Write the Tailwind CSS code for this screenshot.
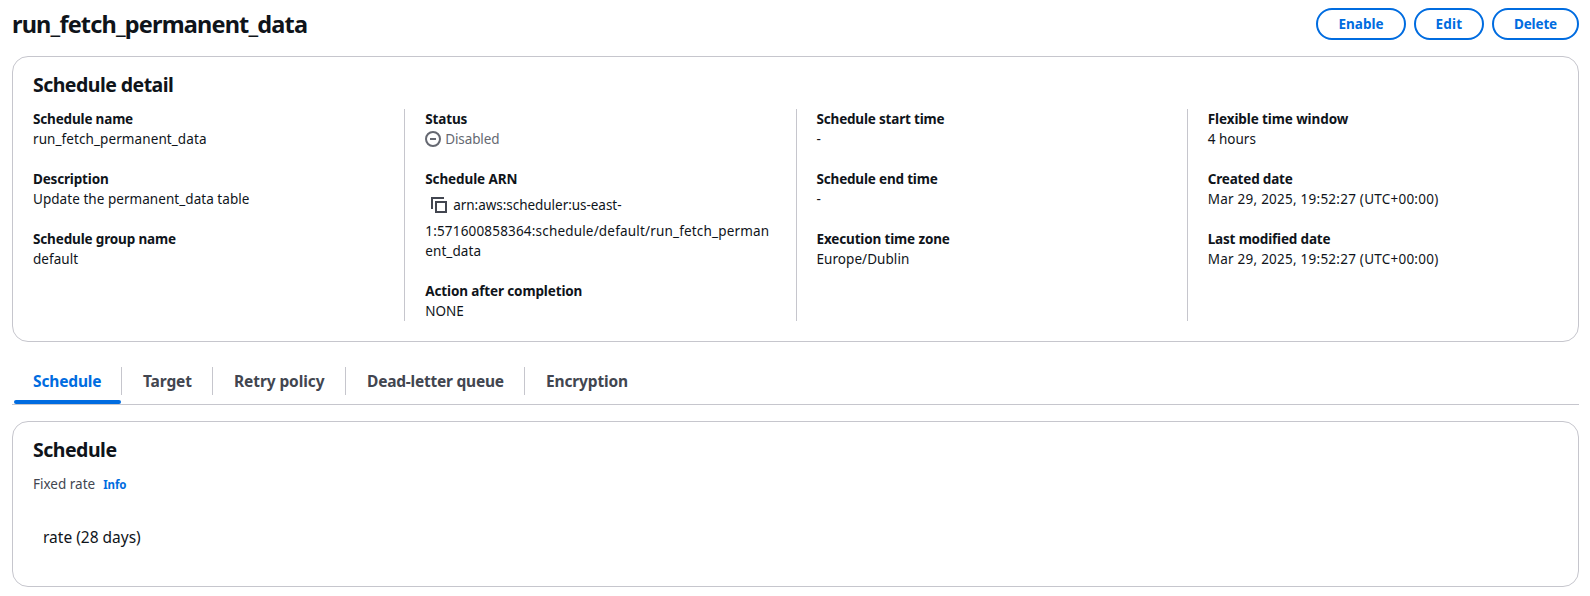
<!DOCTYPE html>
<html lang="en">
<head>
<meta charset="utf-8">
<title>run_fetch_permanent_data</title>
<script src="https://cdn.jsdelivr.net/npm/@tailwindcss/browser@4"></script>
</head>
<body class="bg-white pl-3 pr-[11px] pt-2 font-['Noto_Sans','Open_Sans',sans-serif] text-[13.5px] leading-5 text-[#0f141a]">
  <header class="flex h-8 items-center justify-between">
    <h1 class="text-[23.5px] leading-[30px] font-bold tracking-[-0.83px]">run_fetch_permanent_data</h1>
    <div class="flex gap-2 font-bold text-[#006ce0]">
      <button class="h-8 w-[90px] rounded-[20px] border-2 border-[#006ce0]">Enable</button>
      <button class="h-8 w-[70px] rounded-[20px] border-2 border-[#006ce0] tracking-[0.2px]">Edit</button>
      <button class="h-8 w-[87px] rounded-[20px] border-2 border-[#006ce0] tracking-[-0.15px]">Delete</button>
    </div>
  </header>

  <section class="mt-4 h-[286px] rounded-2xl border border-[#c6c6cd] pt-4">
    <h2 class="px-5 text-[19.5px] leading-6 font-bold tracking-[-0.54px]">Schedule detail</h2>
    <dl class="mt-3 grid h-[212px] grid-cols-4">
      <div class="flex flex-col gap-5 px-5">
        <div><dt class="font-bold tracking-[-0.17px]">Schedule name</dt><dd class="tracking-[0.09px]">run_fetch_permanent_data</dd></div>
        <div><dt class="font-bold tracking-[-0.17px]">Description</dt><dd class="tracking-[0.05px]">Update the permanent_data table</dd></div>
        <div><dt class="font-bold tracking-[-0.15px]">Schedule group name</dt><dd class="tracking-[0.05px]">default</dd></div>
      </div>
      <div class="flex flex-col gap-5 border-l border-[#c6c6cd] px-5">
        <div>
          <dt class="font-bold tracking-[-0.15px]">Status</dt>
          <dd class="flex items-center gap-1 tracking-[-0.12px] text-[#656871]">
            <svg class="size-4" viewBox="0 0 16 16" fill="none" stroke="currentColor" stroke-width="2"><circle cx="8" cy="8" r="7"/><path d="M5 8h6"/></svg>
            Disabled
          </dd>
        </div>
        <div>
          <dt class="font-bold tracking-[-0.11px]">Schedule ARN</dt>
          <dd>
            <div class="flex h-8 items-center gap-1.5 pl-1.5 tracking-[-0.04px]">
              <svg class="size-4 text-[#424650]" viewBox="0 0 16 16" fill="none" stroke="currentColor" stroke-width="2"><path d="M1 12V1h12"/><path d="M5 5h10v10H5z"/></svg>
              arn:aws:scheduler:us-east-
            </div>
            <div class="tracking-[0.18px] whitespace-nowrap">1:571600858364:schedule/default/run_fetch_perman<br><span class="tracking-[0.09px]">ent_data</span></div>
          </dd>
        </div>
        <div><dt class="font-bold tracking-[-0.13px]">Action after completion</dt><dd>NONE</dd></div>
      </div>
      <div class="flex flex-col gap-5 border-l border-[#c6c6cd] px-5">
        <div><dt class="font-bold tracking-[-0.18px]">Schedule start time</dt><dd>-</dd></div>
        <div><dt class="font-bold tracking-[-0.18px]">Schedule end time</dt><dd>-</dd></div>
        <div><dt class="font-bold tracking-[-0.15px]">Execution time zone</dt><dd class="tracking-[0.06px]">Europe/Dublin</dd></div>
      </div>
      <div class="flex flex-col gap-5 border-l border-[#c6c6cd] px-5">
        <div><dt class="font-bold tracking-[-0.1px]">Flexible time window</dt><dd>4 hours</dd></div>
        <div><dt class="font-bold tracking-[-0.18px]">Created date</dt><dd class="tracking-[0.24px]">Mar 29, 2025, 19:52:27 (UTC+00:00)</dd></div>
        <div><dt class="font-bold tracking-[-0.18px]">Last modified date</dt><dd class="tracking-[0.24px]">Mar 29, 2025, 19:52:27 (UTC+00:00)</dd></div>
      </div>
    </dl>
  </section>

  <nav class="mt-[25px] flex h-[38px] border-b border-[#c6c6cd] text-[15.5px] leading-7 font-bold text-[#424650]">
    <div class="flex w-[110px] flex-col justify-between text-[#006ce0]">
      <div class="h-7 border-r border-[#c6c6cd] pl-[21px] tracking-[-0.15px]">Schedule</div>
      <div class="ml-0.5 mr-px h-1 rounded-xs bg-[#006ce0]"></div>
    </div>
    <div class="h-7 w-[91px] border-r border-[#c6c6cd] pl-[21px] tracking-[-0.12px]">Target</div>
    <div class="h-7 w-[133px] border-r border-[#c6c6cd] pl-[21px] tracking-[-0.09px]">Retry policy</div>
    <div class="h-7 w-[179px] border-r border-[#c6c6cd] pl-[21px] tracking-[-0.22px]">Dead-letter queue</div>
    <div class="h-7 pl-[21px] tracking-[-0.15px]">Encryption</div>
  </nav>

  <section class="mt-4 h-[166px] rounded-2xl border border-[#c6c6cd] px-5 pt-4">
    <h2 class="text-[19.5px] leading-6 font-bold tracking-[-0.5px]">Schedule</h2>
    <div class="mt-3 flex gap-2 text-[#424650]">
      <span>Fixed rate</span>
      <a class="pt-px text-[11.5px] leading-5 font-bold tracking-[-0.1px] text-[#006ce0]">Info</a>
    </div>
    <p class="mt-[30px] pl-2.5 text-[15.5px] leading-6">rate (28 days)</p>
  </section>
</body>
</html>
